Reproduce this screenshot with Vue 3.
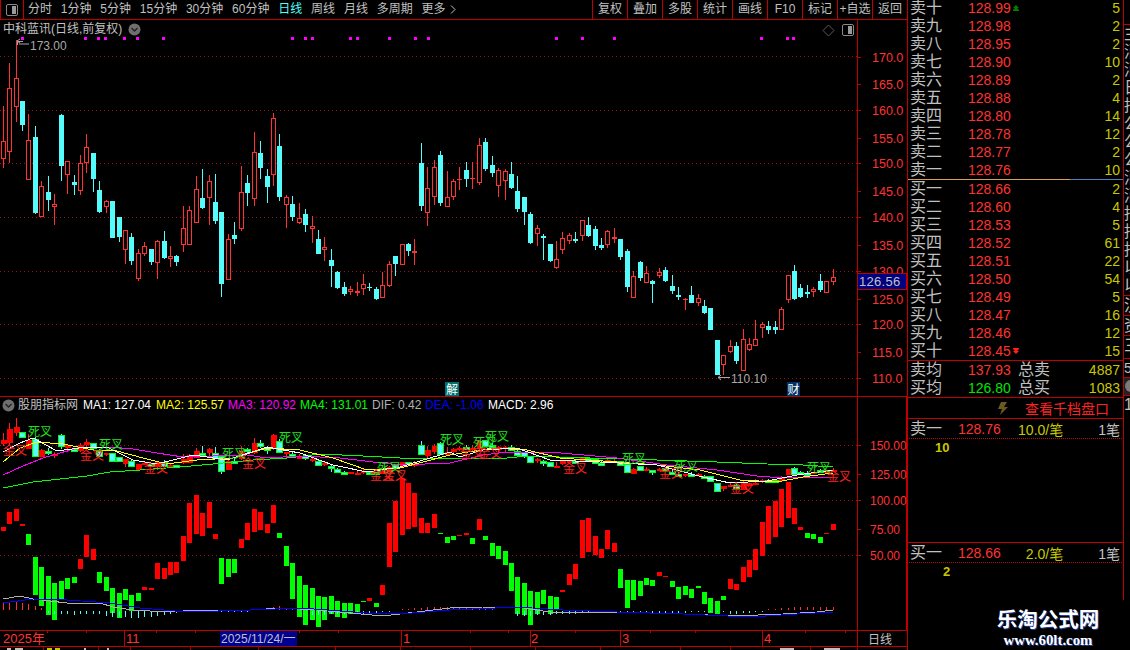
<template>
  <div class="terminal">
    <div class="left">
      <!-- toolbar -->
      <div class="toolbar">
        <div class="layout-btn">
          <svg width="12" height="12" viewBox="0 0 12 12">
            <rect x="0.5" y="0.5" width="11" height="11" rx="1.5" fill="none" stroke="#8a8a8a" />
            <rect x="6" y="2" width="4" height="8" fill="#9a9a9a" />
          </svg>
        </div>
        <div class="periods">
          <span v-for="p in periods" :key="p" :class="{ active: p === '日线' }">{{ p }}</span>
          <span class="more">更多
            <svg width="6" height="9" viewBox="0 0 6 9"><path d="M1 0.5 L5 4.5 L1 8.5" fill="none" stroke="#c0c0c0" /></svg>
          </span>
        </div>
        <div class="actions">
          <span v-for="a in actions" :key="a" class="action">{{ a }}</span>
        </div>
      </div>

      <!-- price pane -->
      <div class="pane price-pane">
        <div class="pane-title">
          <span>中科蓝讯(日线,前复权)</span>
          <svg class="drop" width="13" height="13" viewBox="0 0 13 13">
            <circle cx="6.5" cy="6.5" r="6" fill="#6f6f6f" />
            <path d="M3.5 5 L6.5 8 L9.5 5" fill="none" stroke="#222" stroke-width="1.4" />
          </svg>
        </div>
        <svg class="chart" width="907" height="376" viewBox="0 20 907 376">
          <line v-for="y in priceGrid" :key="y" x1="0" x2="857" :y1="y + 0.5" :y2="y + 0.5" class="grid" />
          <rect v-for="x in signalDots" :key="x" :x="x" y="37" width="3" height="3" fill="#ff00ff" />
          <g v-for="c in candles" :key="c.i">
            <rect :x="c.x" :y="c.high" width="1" :height="c.low - c.high" :fill="c.color" />
            <rect v-if="c.hollow" :x="c.x - 1.5" :y="c.top + 0.5" width="4" :height="c.bot - c.top - 1" fill="#000" :stroke="c.color" />
            <rect v-else :x="c.x - 2" :y="c.top" width="5" :height="Math.max(c.bot - c.top, 1)" :fill="c.color" />
          </g>
          <!-- high / low notes -->
          <path d="M23 41.5 H17.5 V45 M17 41 L20 39 M17 41 L20 43 M19 44 H29" fill="none" stroke="#a8a8a8" />
          <text x="30" y="50" class="note">173.00</text>
          <path d="M718 377.5 H730 M718 377.5 L721 375 M718 377.5 L721 380" fill="none" stroke="#a8a8a8" />
          <text x="731" y="383" class="note">110.10</text>
          <!-- corner icons -->
          <path d="M828.5 25 L834 30.5 L828.5 36 L823 30.5 Z" fill="none" stroke="#5a5a5a" />
          <rect x="842.5" y="24.5" width="11" height="11" rx="1.5" fill="none" stroke="#8a8a8a" />
          <rect x="848" y="26" width="4" height="8" fill="#9a9a9a" />
          <!-- axis -->
          <rect x="857" y="20" width="1" height="376" fill="#c00000" />
          <g v-for="t in priceAxis" :key="t.y">
            <rect x="858" :y="t.y" width="3" height="1" fill="#c00000" />
            <text x="872" :y="t.y + 5" class="axis-text">{{ t.label }}</text>
          </g>
          <rect x="857.5" y="273.5" width="49" height="16" fill="#000080" stroke="#c00000" />
          <text x="859" y="286" class="last-price">126.56</text>
          <!-- event badges -->
          <rect x="445" y="382" width="14" height="14" fill="#007070" />
          <text x="452" y="394" class="badge">解</text>
          <rect x="787" y="382" width="13" height="14" fill="#003366" />
          <text x="793.5" y="394" class="badge">财</text>
        </svg>
      </div>

      <!-- indicator pane -->
      <div class="pane indicator-pane">
        <div class="pane-title indicator-title">
          <svg class="drop first" width="13" height="13" viewBox="0 0 13 13">
            <circle cx="6.5" cy="6.5" r="6" fill="#6f6f6f" />
            <path d="M3.5 5 L6.5 8 L9.5 5" fill="none" stroke="#222" stroke-width="1.4" />
          </svg>
          <span class="pane-name">股朋指标网</span>
          <span v-for="m in legend" :key="m.label" class="legend-item" :style="{ color: m.color, width: m.width + 'px' }">{{ m.label }}</span>
        </div>
        <svg class="chart" width="907" height="233" viewBox="0 397 907 233">
          <line v-for="y in [445, 500, 555]" :key="y" x1="0" x2="857" :y1="y + 0.5" :y2="y + 0.5" class="grid" />
          <rect v-for="b in bars" :key="b.i" :x="b.x - 2" :y="b.top" width="5" :height="b.h" :fill="b.fill" />
          <g v-for="c in miniCandles" :key="c.i">
            <rect :x="c.x" :y="c.high" width="1" :height="c.wick" :fill="c.wickColor" />
            <rect v-if="c.red" :x="c.x - 2" :y="c.top" width="6" :height="c.h" fill="#ff0000" />
            <rect v-else :x="c.x - 2.5" :y="c.top + 0.5" width="6" :height="c.h" fill="#54fcfc" stroke="#00ff00" />
          </g>
          <polyline :points="maLines.green" class="line" stroke="#00ff00" />
          <polyline :points="maLines.magenta" class="line" stroke="#ff00ff" />
          <polyline :points="maLines.yellow" class="line" stroke="#ffff00" />
          <polyline :points="maLines.white" class="line" stroke="#ffffff" />
          <rect v-for="h in histTicks" :key="h.i" :x="h.x" :y="h.top" width="1" :height="h.h" :fill="h.fill" />
          <polyline :points="macdLines.dif" class="line" stroke="#b0b0b0" />
          <polyline :points="macdLines.dea" class="line" stroke="#0000ff" />
          <text v-for="(s, i) in crossLabels" :key="i" :x="s[1]" :y="s[2]" :fill="s[0] === '金叉' ? '#ff2020' : '#20e020'" class="cross">{{ s[0] }}</text>
          <rect x="857" y="397" width="1" height="233" fill="#c00000" />
          <rect x="906" y="397" width="1" height="233" fill="#c00000" />
          <g v-for="t in indicatorAxis" :key="t.y">
            <rect x="858" :y="t.y" width="3" height="1" fill="#c00000" />
            <text x="870" :y="t.y + 5" class="axis-text small">{{ t.label }}</text>
          </g>
        </svg>
      </div>

      <!-- date strip -->
      <div class="date-strip">
        <svg width="907" height="15" viewBox="0 631 907 15">
          <rect v-for="x in dateTicks" :key="x" :x="x" y="631" width="1" height="2" fill="#c00000" />
          <rect v-for="x in [124, 401, 530, 620, 762]" :key="x" :x="x" y="631" width="1" height="15" fill="#c00000" />
          <text x="3" y="643" class="date-text">2025年</text>
          <text x="126" y="643" class="date-text">11</text>
          <rect x="220" y="631" width="77" height="15" fill="#000090" />
          <text x="221" y="643" class="date-cursor">2025/11/24/一</text>
          <text x="403" y="643" class="date-text">1</text>
          <text x="531" y="643" class="date-text">2</text>
          <text x="622" y="643" class="date-text">3</text>
          <text x="764" y="643" class="date-text">4</text>
          <rect x="857" y="631" width="1" height="15" fill="#c00000" />
          <text x="868" y="644" class="date-cursor cycle">日线</text>
        </svg>
      </div>
      <div class="tab-edge">
        <svg width="907" height="3" viewBox="0 0 907 3">
          <rect v-for="x in tabTicks" :key="x" :x="x" y="0" width="1" height="3" fill="#a00000" />
          <rect v-for="r in tabMarks" :key="r[0]" :x="r[0]" y="1" :width="r[1]" height="2" :fill="r[2]" />
        </svg>
      </div>
    </div>

    <div class="right">
      <div class="book">
        <div class="depth sell">
          <div v-for="r in sellRows" :key="r[0]" class="row">
            <span class="label">{{ r[0] }}</span>
            <span class="price">{{ r[1] }}<svg v-if="r[0] === '卖十'" class="limit" width="6" height="6" viewBox="0 0 6 6"><path d="M3 0 L6 3 H4 L6 5 V6 H0 V5 L2 3 H0 Z" fill="#008000" /></svg></span>
            <span class="qty">{{ r[2] }}</span>
          </div>
        </div>
        <div class="split"></div>
        <div class="depth">
          <div v-for="r in buyRows" :key="r[0]" class="row">
            <span class="label">{{ r[0] }}</span>
            <span class="price">{{ r[1] }}<svg v-if="r[0] === '买十'" class="limit" width="6" height="6" viewBox="0 0 6 6"><path d="M0 0 H6 V1 L4 3 H6 L3 6 L0 3 H2 L0 1 Z" fill="#ff2020" /></svg></span>
            <span class="qty">{{ r[2] }}</span>
          </div>
        </div>
        <div class="summary">
          <div class="row">
            <span class="label">卖均</span><span class="price">137.93</span>
            <span class="total">总卖</span><span class="qty">4887</span>
          </div>
          <div class="row">
            <span class="label">买均</span><span class="price up">126.80</span>
            <span class="total">总买</span><span class="qty">1083</span>
          </div>
        </div>
        <div class="depth-link">
          <svg width="11" height="13" viewBox="0 0 11 13"><path d="M4 0 H10 L7 5 H11 L3 13 L5 7 H1 Z" fill="#6b5a20" /></svg>
          <span>查看千档盘口</span>
        </div>
        <div class="queue">
          <div class="queue-head">
            <span class="label">卖一</span><span class="q-price">128.76</span>
            <span class="q-avg">10.0/笔</span><span class="q-count">1笔</span>
          </div>
          <div class="q-lots first-lot">10</div>
        </div>
        <div class="queue short">
          <div class="queue-head">
            <span class="label">买一</span><span class="q-price">128.66</span>
            <span class="q-avg">2.0/笔</span><span class="q-count">1笔</span>
          </div>
          <div class="q-lots second-lot">2</div>
        </div>
        <div class="watermark">
          <div class="wm-name">乐淘公式网</div>
          <div class="wm-url">www.60lt.com</div>
        </div>
      </div>
      <div class="side">
        <div class="side-top"></div>
        <div v-for="(ch, i) in sideChars" :key="i" class="side-char">{{ ch }}</div>
        <div class="side-cell">汉</div>
        <div class="side-cell">资</div>
        <div class="side-cell tall">三</div>
        <div class="side-num">5</div>
        <div class="side-dot"><i></i></div>
        <div class="side-char">1</div>
      </div>
    </div>
  </div>
</template>

<script setup>
const periods = ['分时', '1分钟', '5分钟', '15分钟', '30分钟', '60分钟', '日线', '周线', '月线', '多周期']
const actions = ['复权', '叠加', '多股', '统计', '画线', 'F10', '标记', '+自选', '返回']

const priceGrid = [56, 110, 163, 217, 271, 324, 378]
const priceAxis = [
  [57, '170.0'], [84, '165.0'], [110, '160.0'], [138, '155.0'], [163, '150.0'], [191, '145.0'], [217, '140.0'],
  [245, '135.0'], [271, '130.0'], [299, '125.0'], [324, '120.0'], [352, '115.0'], [378, '110.0'],
].map(([y, label]) => ({ y, label }))
const indicatorAxis = [
  [445, '150.00'], [474, '125.00'], [500, '100.00'], [529, '75.00'], [555, '50.00'],
].map(([y, label]) => ({ y, label }))

const signalDots = [21, 84, 97, 104, 123, 136, 162, 291, 304, 311, 349, 356, 388, 414, 427, 555, 581, 613, 760, 786, 792]

// 每根K线: 类型, 实体上, 实体下, 最高, 最低 (屏幕坐标)
const kline = [
  ['r',141,159,106,168],['r',88,152,63,163],['r',78,107,40,122],['c',101,125,101,131],['r',140,180,114,180],
  ['c',137,213,126,214],['r',186,217,181,217],['c',192,200,176,211],['r',204,207,194,225],['c',115,166,114,181],
  ['r',161,175,161,194],['c',182,185,175,195],['r',163,191,155,195],['r',147,163,134,173],['c',153,179,153,192],
  ['c',190,212,181,213],['r',201,207,200,213],['c',201,238,201,238],['c',217,237,217,242],['r',230,250,230,264],
  ['c',237,261,233,265],['r',253,279,249,281],['r',246,254,242,256],['c',249,262,249,265],['r',241,263,240,279],
  ['c',241,258,231,259],['r',256,259,246,267],['c',256,262,255,266],['r',228,245,206,252],['r',210,245,206,245],
  ['r',189,223,176,223],['c',198,208,169,209],['r',181,198,175,225],['c',202,221,174,224],['c',212,284,212,297],
  ['r',239,280,234,280],['c',235,239,222,244],['r',192,229,166,231],['c',183,193,175,206],['r',152,199,132,206],
  ['c',153,168,141,179],['c',176,187,169,203],['r',118,175,113,186],['c',146,197,134,201],['r',197,205,195,228],
  ['c',204,217,196,221],['r',218,223,203,224],['c',214,225,209,232],['r',226,229,216,243],['c',239,254,230,254],
  ['r',247,250,237,261],['c',260,266,249,287],['c',272,288,271,289],['c',287,294,282,296],['r',289,292,286,295],
  ['r',291,293,282,296],['r',284,289,274,295],['c',287,288,283,291],['c',289,299,287,300],['r',285,298,272,298],
  ['r',264,286,261,287],['c',256,264,256,276],['r',244,265,244,265],['c',244,251,243,256],['r',251,253,239,265],
  ['c',163,206,143,211],['r',188,213,167,226],['r',167,197,160,205],['c',155,203,151,206],['r',197,207,171,207],
  ['r',181,197,179,200],['r',179,180,167,190],['c',170,179,162,187],['r',178,179,162,189],['r',145,183,138,185],
  ['c',142,169,138,171],['c',165,173,156,177],['r',170,186,168,197],['r',171,181,169,200],['c',174,188,162,189],
  ['c',191,209,176,212],['c',197,212,197,225],['c',214,243,212,244],['r',228,234,225,246],['c',236,238,234,260],
  ['c',244,261,244,262],['r',259,268,241,269],['r',238,250,232,254],['r',235,241,233,244],['c',239,241,232,243],
  ['r',220,236,220,241],['c',225,236,217,237],['c',229,246,226,250],['c',245,248,238,250],['r',231,245,230,248],
  ['r',237,239,228,243],['c',239,257,239,260],['c',251,287,249,292],['r',276,298,271,298],['c',262,278,261,281],
  ['r',273,283,266,283],['c',281,284,280,303],['r',272,276,268,278],['c',270,281,267,282],['c',286,291,275,294],
  ['c',295,297,287,300],['r',299,300,298,310],['c',295,303,286,303],['r',298,303,294,306],['c',306,313,300,314],
  ['c',308,330,308,330],['c',340,375,340,375],['r',355,365,355,375],['r',346,352,340,353],['c',346,361,342,364],
  ['r',339,371,329,371],['r',344,350,338,351],['r',339,346,320,346],['r',324,328,322,338],['c',326,330,321,334],
  ['c',327,330,321,334],['r',309,330,307,330],['r',275,300,275,303],['c',271,299,265,300],['c',288,297,284,298],
  ['c',292,294,285,298],['r',289,292,287,297],['c',281,290,274,292],['r',281,293,281,293],['r',277,282,269,285],
]

const colOf = (i) => Math.floor(3.25 + 6.433 * i)

const candles = kline.map(([t, top, bot, high, low], i) => ({
  i, top, bot, high, low,
  x: colOf(i),
  color: t === 'r' ? '#ff3232' : '#54fcfc',
  hollow: t === 'r' && bot - top > 2,
}))

// 副图里的K线和主图同一份数据, 只是纵轴压缩了
const toMini = (y) => Math.round(445 + (y - 163) * 0.216)
const miniCandles = kline.map(([t, top, bot, high, low], i) => {
  const mt = toMini(top)
  const mh = toMini(high)
  return {
    i,
    x: colOf(i),
    red: t === 'r',
    top: mt,
    h: Math.max(toMini(bot) - mt, 2),
    high: mh,
    wick: Math.max(toMini(low) - mh, 1),
    wickColor: t === 'r' ? '#ff2020' : '#54fcfc',
  }
})

const barData = [
  [527,531,1],[512,524,1],[509,521,1],[524,526,1],[534,545,0],[557,595,0],[567,606,0],[576,615,0],[583,620,0],[581,600,0],
  [578,589,0],[577,583,0],[559,569,1],[535,557,1],[549,560,1],[572,583,0],[577,591,0],[588,613,0],[593,618,0],[589,600,0],
  [595,611,0],[593,601,0],[587,590,1],[588,590,1],[563,579,1],[568,579,1],[562,575,1],[562,573,1],[536,561,1],[503,543,1],
  [495,534,1],[513,536,1],[502,528,1],[534,539,1],[558,584,0],[559,577,0],[559,573,0],[539,548,1],[523,540,1],[509,532,1],
  [512,530,1],[524,533,1],[505,523,1],[533,538,0],[546,566,0],[563,599,0],[576,617,0],[585,625,0],[588,620,0],[596,627,0],
  [597,620,0],[596,614,0],[601,617,0],[603,618,0],[603,614,0],[604,614,0],[601,602,0],[598,601,1],[603,607,0],[585,595,1],
  [523,567,1],[501,552,1],[478,535,1],[483,529,1],[493,527,1],[518,533,1],[523,533,1],[514,528,1],[533,534,0],[537,543,0],
  [536,540,0],[535,536,1],[533,535,1],[538,544,0],[519,530,1],[536,540,0],[543,556,0],[546,559,0],[551,565,0],[563,591,0],
  [577,614,0],[583,615,0],[591,625,0],[592,614,0],[590,604,0],[596,614,0],[597,609,0],[590,592,1],[574,585,1],[564,579,1],
  [520,558,1],[518,552,1],[536,555,1],[549,558,1],[530,549,1],[543,552,1],[569,588,0],[580,608,0],[580,600,0],[581,596,0],
  [578,585,0],[580,586,0],[572,576,1],[576,577,1],[581,587,0],[587,599,0],[586,595,0],[589,598,0],[586,588,0],[592,604,0],
  [598,613,0],[601,614,0],[596,600,0],[579,589,1],[584,590,1],[567,582,1],[560,577,1],[549,570,1],[522,556,1],[506,544,1],
  [501,537,1],[489,527,1],[482,518,1],[508,524,1],[527,530,1],[533,538,0],[534,539,0],[537,543,0],[533,534,1],[524,530,1],
]
const bars = barData.map(([top, bot, red], i) => ({
  i, top, h: bot - top, x: colOf(i), fill: red ? '#ff0000' : '#00ff00',
}))

const pts = (list) => list.map((p) => p.join(',')).join(' ')
const maLines = {
  green: pts([[3,488],[33,482],[60,479],[87,476],[110,472],[140,470],[180,467],[213,464],[253,460],[287,458],[320,454],[363,456],[400,458],[450,458],[507,458],[527,456],[590,458],[657,460],[717,462],[767,464],[803,465],[833,467]]),
  magenta: pts([[3,475],[23,466],[43,458],[67,451],[80,447],[110,447],[133,449],[157,453],[183,457],[213,456],[247,455],[267,458],[300,456],[340,458],[373,462],[400,465],[450,463],[483,455],[507,452],[550,452],[617,458],[667,465],[717,470],[757,476],[783,478],[833,477]]),
  yellow: pts([[3,462],[20,448],[37,442],[63,444],[93,450],[117,451],[143,458],[167,464],[197,460],[233,458],[267,448],[300,450],[333,458],[367,470],[400,468],[450,455],[493,448],[527,450],[560,458],[617,462],[657,465],[700,470],[740,480],[777,482],[803,477],[833,473]]),
  white: pts([[3,452],[20,443],[33,438],[57,451],[87,447],[107,447],[133,460],[157,464],[193,455],[227,460],[267,447],[300,453],[333,465],[367,472],[400,467],[450,452],[460,457],[483,450],[517,448],[550,460],[600,462],[657,465],[703,477],[730,483],[767,481],[797,475],[833,470]]),
}
const macdLines = {
  dif: pts([[3,599],[20,596],[33,599],[67,603],[100,603],[113,607],[133,610],[167,612],[200,610],[250,610],[283,608],[317,610],[350,613],[383,616],[417,612],[450,608],[483,607],[517,607],[550,612],[617,612],[683,614],[733,616],[783,614],[817,612],[833,610]]),
  dea: pts([[3,603],[33,599],[67,600],[110,603],[140,608],[187,612],[250,610],[300,608],[367,613],[400,614],[450,610],[517,607],[563,610],[617,612],[683,614],[750,617],[797,614],[833,612]]),
}

const histData = [
  8,8,8,7,6,4,2,
  -2,-3,-3,-3,-4,-3,-3,-3,-3,-5,-6,-6,-6,-7,-7,-6,-6,-5,-4,-3,-2,-1,-1,-1,-1,-1,-1,-1,-1,-1,-1,-1,
  1,1,2,3,4,2,1,0,0,
  -4,-4,-4,-3,-3,-3,-3,-3,-3,-2,-2,-1,-1,0,
  1,1,2,2,3,3,3,3,3,3,3,2,1,1,1,0,0,0,
  -5,-5,-5,-4,-4,-4,-3,-3,-3,-3,-2,-2,-2,-2,-2,-2,-2,-2,-2,-2,-2,-2,-2,-2,-2,-2,-2,-1,-1,-1,-1,-1,-1,
  -3,-3,-2,-2,-1,-1,
  1,1,2,2,3,3,3,3,3,3,3,
]
const histTicks = histData
  .map((v, i) => ({
    i,
    x: colOf(i),
    top: v > 0 ? 610 - v : 611,
    h: Math.abs(v),
    fill: v > 0 ? '#ff3232' : '#54fcfc',
  }))
  .filter((h) => h.h > 0)

const crossLabels = [
  ['死叉',28,436],['金叉',3,455],['死叉',99,449],['金叉',80,460],['金叉',144,473],['死叉',222,458],['金叉',242,468],
  ['死叉',279,442],['金叉',370,480],['死叉',377,472],['金叉',383,480],['死叉',440,444],['死叉',473,447],['金叉',460,458],
  ['死叉',485,441],['金叉',478,458],['金叉',563,473],['死叉',622,463],['金叉',659,478],['死叉',674,471],['金叉',730,493],
  ['死叉',807,472],['金叉',827,481],
]

const legend = [
  { label: 'MA1: 127.04', color: '#ffffff', width: 73 },
  { label: 'MA2: 125.57', color: '#ffff00', width: 72 },
  { label: 'MA3: 120.92', color: '#ff00ff', width: 72 },
  { label: 'MA4: 131.01', color: '#00ff00', width: 72 },
  { label: 'DIF: 0.42', color: '#b0b0b0', width: 53 },
  { label: 'DEA: -1.06', color: '#0000ff', width: 63 },
  { label: 'MACD: 2.96', color: '#ffffff', width: 70 },
]

const dateTicks = [47, 86, 156, 195, 260, 299, 338, 470, 508, 575, 650, 695, 805, 845]
const tabTicks = [43, 98, 130, 190, 258, 335, 400, 470, 535, 600, 680, 730, 810, 857]
const tabMarks = [[7, 4, '#c0c0c0'], [15, 8, '#c0c0c0'], [47, 5, '#c8c800'], [55, 5, '#c8c800'], [84, 2, '#c0c0c0'], [107, 2, '#c0c0c0'], [780, 14, '#c0c0c0'], [824, 16, '#c0c0c0']]

const sellRows = [
  ['卖十', '128.99', 5], ['卖九', '128.98', 2], ['卖八', '128.95', 2], ['卖七', '128.90', 10], ['卖六', '128.89', 2],
  ['卖五', '128.88', 4], ['卖四', '128.80', 14], ['卖三', '128.78', 12], ['卖二', '128.77', 2], ['卖一', '128.76', 10],
]
const buyRows = [
  ['买一', '128.66', 2], ['买二', '128.60', 4], ['买三', '128.53', 5], ['买四', '128.52', 61], ['买五', '128.51', 22],
  ['买六', '128.50', 54], ['买七', '128.49', 5], ['买八', '128.47', 16], ['买九', '128.46', 12], ['买十', '128.45', 15],
]
const sideChars = ['主', '消', '消', '日', '招', '公', '公', '公', '消', '消', '招', '招', '招', '以', '以']
</script>

<style>
html, body { background: #000; }
</style>

<style scoped>
.terminal {
  width: 1130px;
  height: 650px;
  overflow: hidden;
  display: grid;
  grid-template-columns: 908px 222px;
  background: #000;
  color: #c0c0c0;
  font-family: "Liberation Sans", "Noto Sans CJK SC", sans-serif;
  font-size: 12px;
}
svg { display: block; }

/* LEFT */
.left { border-right: 1px solid #c00000; display: flex; flex-direction: column; height: 650px; overflow: hidden; }

.toolbar {
  height: 20px;
  flex: none;
  box-sizing: border-box;
  border-bottom: 1px solid #c00000;
  display: flex;
  align-items: center;
  line-height: 19px;
}
.layout-btn {
  width: 24px;
  height: 19px;
  box-sizing: border-box;
  border-left: 1px solid #c00000;
  border-right: 1px solid #c00000;
  display: flex;
  align-items: center;
  justify-content: center;
}
.periods { display: flex; gap: 8.8px; margin-left: 4px; }
.periods .active { color: #54fcfc; }
.more { display: flex; align-items: center; gap: 4px; }
.actions { margin-left: auto; display: flex; }
.action {
  width: 35px;
  height: 19px;
  box-sizing: border-box;
  border-left: 1px solid #c00000;
  text-align: center;
}

.pane { position: relative; flex: none; border-bottom: 1px solid #c00000; }
.price-pane { height: 376px; }
.indicator-pane { height: 233px; }
.pane-title {
  position: absolute;
  left: 3px;
  top: 2px;
  display: flex;
  align-items: center;
  gap: 6px;
  line-height: 15px;
  font-size: 12px;
  white-space: nowrap;
  z-index: 1;
}
.indicator-title { left: 2px; top: 1px; gap: 0; }
.indicator-title .drop.first { margin-right: 3px; }
.pane-name { width: 65px; }
.legend-item { flex: none; font-size: 12px; }

.grid { stroke: #a01010; stroke-dasharray: 1 3; stroke-width: 1; }
.note { fill: #a8a8a8; font-size: 12px; }
.axis-text { fill: #ff3232; font-size: 12.5px; }
.axis-text.small { font-size: 12px; }
.last-price { fill: #c0c0c0; font-size: 13px; letter-spacing: 0.3px; }
.badge { fill: #fff; font-size: 12px; text-anchor: middle; }
.line { fill: none; stroke-width: 1; shape-rendering: crispEdges; }
.cross { font-size: 12px; }

.date-strip { height: 16px; flex: none; box-sizing: border-box; border-bottom: 1px solid #c00000; }
.date-text { fill: #ff3232; font-size: 13px; }
.date-cursor { fill: #c0c0c0; font-size: 12px; }
.cycle { font-size: 12px; }
.tab-edge { flex: none; height: 3px; overflow: hidden; }

/* RIGHT */
.right { display: grid; grid-template-columns: 215px 7px; height: 650px; }
.book { display: flex; flex-direction: column; height: 650px; overflow: hidden; }

.depth.sell { margin-top: -1px; }
.row {
  height: 18px;
  display: grid;
  grid-template-columns: 58px 52px 1fr;
  padding: 0 3px 0 2px;
  align-items: center;
  line-height: 18px;
}
.label { font-size: 16px; color: #c0c0c0; line-height: 18px; }
.price { font-size: 14px; color: #ff3232; display: flex; align-items: center; }
.price.up { color: #00e600; }
.qty { font-size: 14px; color: #c8c800; text-align: right; }
.limit { margin-left: 2px; flex: none; }
.split {
  height: 1px;
  flex: none;
  background: linear-gradient(to right, #d8a050 0, #d8a050 162px, #5080c0 162px);
}
.summary { border-top: 1px solid #c00000; border-bottom: 1px solid #c00000; flex: none; }
.summary .row { grid-template-columns: 58px 50px 38px 1fr; }
.total { font-size: 16px; }
.depth-link {
  height: 21px;
  flex: none;
  box-sizing: border-box;
  border-bottom: 1px solid #c00000;
  display: flex;
  align-items: center;
  padding-left: 89px;
  gap: 17px;
  color: #ff2020;
  font-size: 14px;
}
.queue { height: 124px; flex: none; box-sizing: border-box; border-bottom: 1px solid #c00000; }
.queue.short { height: 59px; border-bottom: none; }
.queue-head {
  height: 20px;
  box-sizing: border-box;
  margin: 0 1px;
  padding: 0 2px 0 1px;
  display: grid;
  grid-template-columns: 48px 58px 1fr auto;
  align-items: center;
  border-bottom: 1px dotted #b01010;
}
.q-price { color: #ff3232; font-size: 14px; }
.q-avg { color: #c8c800; font-size: 14px; text-align: right; padding-right: 35px; }
.q-count { font-size: 14px; }
.q-lots { color: #c8c800; font-size: 13px; font-weight: 700; line-height: 18px; }
.first-lot { margin-left: 27px; }
.second-lot { margin-left: 35px; }

.watermark { text-align: center; color: #fff; margin-top: 5px; width: 200px; padding-left: 87px; box-sizing: content-box; }
.wm-name {
  width: 106px;
  font-size: 20.5px;
  font-weight: 700;
  line-height: 25px;
  white-space: nowrap;
  text-shadow: 1px 1px 0 #2040a0;
}
.wm-url {
  width: 106px;
  font-family: "Liberation Serif", serif;
  font-size: 14.8px;
  font-weight: 700;
  line-height: 16px;
  text-shadow: 1px 1px 0 #2040a0;
}

/* 右边被截断的那一栏 */
.side { border-left: 1px solid #c00000; overflow: hidden; height: 600px; font-size: 16px; color: #c0c0c0; }
.side-top { height: 25px; box-sizing: border-box; border-bottom: 1px solid #c00000; }
.side-char { height: 18px; line-height: 18px; white-space: nowrap; }
.side-cell { height: 20px; line-height: 20px; border-top: 1px solid #c00000; box-sizing: border-box; }
.side-cell.tall { height: 23px; }
.side-num { height: 19px; line-height: 19px; border-top: 1px solid #c00000; box-sizing: border-box; font-size: 14px; }
.side-dot { height: 19px; box-sizing: border-box; border-top: 1px solid #c00000; border-bottom: 1px solid #c00000; background: #222; padding: 2px 0 0 1px; }
.side-dot i { display: block; width: 12px; height: 12px; border-radius: 50%; background: #7a7a7a; }
</style>
